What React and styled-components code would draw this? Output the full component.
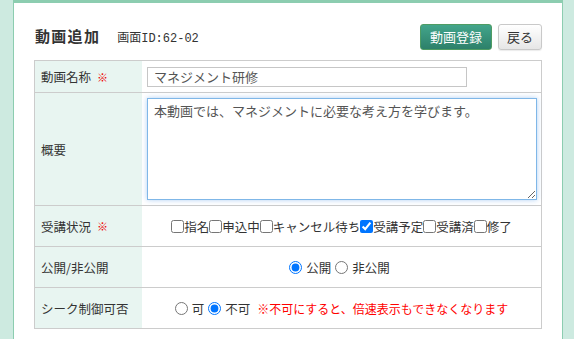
import React from 'react';
import styled, { createGlobalStyle } from 'styled-components';

const GlobalStyle = createGlobalStyle`
  body {
    margin: 0;
    background: #cdeae0;
    font-family: "Noto Sans CJK JP", "Liberation Sans", sans-serif;
    color: #333;
  }
`

const Panel = styled.div`
  margin-left: 13px;
  width: 550px;
  min-height: 360px;
  background: #fff;
  border: 1px solid #8ccdb0;
  border-top: 3px solid #8ccdb0;
  border-bottom: none;
  padding: 21px 20px 0 20px;
  box-sizing: border-box;
`

const Header = styled.div`
  display: flex;
  justify-content: space-between;
  align-items: flex-start;
  height: 26px;
  margin-bottom: 10px;
`

const TitleGroup = styled.div`
  display: flex;
  align-items: baseline;
  gap: 17px;
  padding-left: 1px;
  padding-top: 3px;
`

const Title = styled.h1`
  margin: 0;
  font-size: 15px;
  font-weight: bold;
  line-height: 18px;
  color: #333;
  letter-spacing: 1.3px;
`

const ScreenId = styled.span`
  font-family: "Liberation Mono", "Noto Sans CJK JP", monospace;
  font-size: 12px;
  line-height: 18px;
  color: #333;
`

const Buttons = styled.div`
  display: flex;
  gap: 6px;
`

const Button = styled.button`
  height: 26px;
  padding: 0 ${p => (p.primary ? '9px' : '8px')};
  font-family: inherit;
  font-size: 13px;
  line-height: 24px;
  border-radius: 3px;
  cursor: pointer;
  color: ${p => (p.primary ? '#fff' : '#333')};
  border: 1px solid ${p => (p.primary ? '#4f9c63' : '#c9c9c9')};
  background: ${p =>
    p.primary
      ? 'linear-gradient(#43a58b, #2d806a)'
      : 'linear-gradient(#ffffff, #e6e6e6)'};
  box-shadow: ${p => (p.primary ? 'none' : '0 1px 1px rgba(0,0,0,0.08)')};
`

const Form = styled.div`
  width: 508px;
  border: 1px solid #cccccc;
  box-sizing: border-box;
`

const Row = styled.div`
  display: flex;
  height: ${p => p.h}px;
  & + & {
    border-top: 1px solid #cccccc;
  }
`

const Label = styled.div`
  width: 107px;
  flex-shrink: 0;
  background: #e8f5f1;
  display: flex;
  align-items: center;
  padding-left: 6px;
  box-sizing: border-box;
  font-size: 12.5px;
  color: #333;
`

const Req = styled.span`
  color: #ee0000;
  font-weight: bold;
  font-size: 11px;
  margin-left: 6px;
`

const Value = styled.div`
  flex: 1;
  display: flex;
  align-items: center;
  justify-content: ${p => (p.center ? 'center' : 'flex-start')};
  padding: 0 5px;
  font-size: 12.5px;
  color: #333;
  white-space: nowrap;
`

const TextInput = styled.input`
  width: 320px;
  height: 20px;
  box-sizing: border-box;
  border: 1px solid #c6c6c6;
  padding: 0 6px;
  font-family: inherit;
  font-size: 13px;
  color: #555;
  outline: none;
`

const TextArea = styled.textarea`
  width: 390px;
  height: 102px;
  box-sizing: border-box;
  border: 1px solid #7fb7e8;
  box-shadow: 0 0 5px rgba(110, 170, 235, 0.55);
  padding: 3px 6px;
  font-family: inherit;
  font-size: 13px;
  line-height: 18px;
  color: #555;
  outline: none;
  align-self: flex-start;
  margin-top: 5px;
`

const Check = styled.label`
  display: inline-flex;
  align-items: center;
  input {
    margin: 0;
    width: 13px;
    height: 13px;
  }
`

const Radio = styled.label`
  display: inline-flex;
  align-items: center;
  margin-right: 4px;
  input {
    margin: 0 4px 0 0;
    width: 13px;
    height: 13px;
  }
`

const Warning = styled.span`
  color: #ff0000;
  font-size: 12px;
  margin-left: 3px;
`

const statuses = [
  { name: '指名' },
  { name: '申込中' },
  { name: 'キャンセル待ち' },
  { name: '受講予定', checked: true },
  { name: '受講済' },
  { name: '修了' },
]

function App() {
  return (
    <>
      <GlobalStyle />
      <Panel>
        <Header>
          <TitleGroup>
            <Title>動画追加</Title>
            <ScreenId>画面ID:62-02</ScreenId>
          </TitleGroup>
          <Buttons>
            <Button primary>動画登録</Button>
            <Button>戻る</Button>
          </Buttons>
        </Header>

        <Form>
          <Row h={31}>
            <Label>動画名称<Req>※</Req></Label>
            <Value>
              <TextInput defaultValue="マネジメント研修" />
            </Value>
          </Row>
          <Row h={112}>
            <Label>概要</Label>
            <Value>
              <TextArea defaultValue="本動画では、マネジメントに必要な考え方を学びます。" />
            </Value>
          </Row>
          <Row h={40}>
            <Label>受講状況<Req>※</Req></Label>
            <Value center>
              {statuses.map(s => (
                <Check key={s.name}>
                  <input type="checkbox" defaultChecked={s.checked} />
                  {s.name}
                </Check>
              ))}
            </Value>
          </Row>
          <Row h={40}>
            <Label>公開/非公開</Label>
            <Value center>
              <Radio><input type="radio" name="pub" defaultChecked />公開</Radio>
              <Radio><input type="radio" name="pub" />非公開</Radio>
            </Value>
          </Row>
          <Row h={40}>
            <Label>シーク制御可否</Label>
            <Value center>
              <Radio><input type="radio" name="seek" />可</Radio>
              <Radio><input type="radio" name="seek" defaultChecked />不可</Radio>
              <Warning>※不可にすると、倍速表示もできなくなります</Warning>
            </Value>
          </Row>
        </Form>
      </Panel>
    </>
  );
}

export default App;
